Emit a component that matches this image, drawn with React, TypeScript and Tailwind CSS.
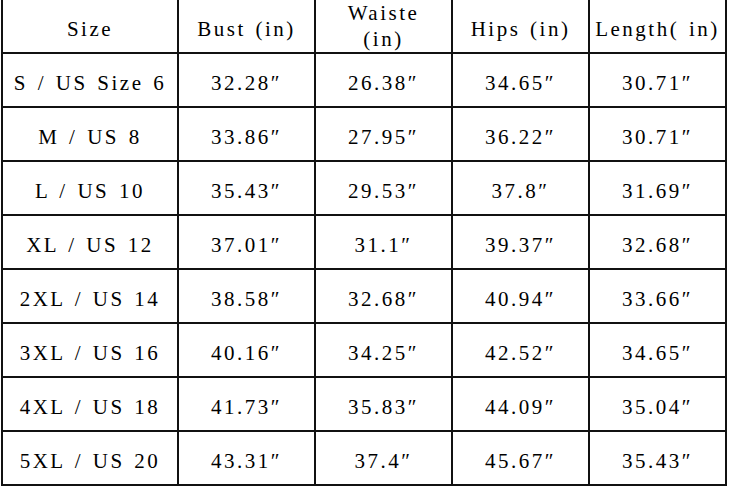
const headers = ["Size", "Bust (in)", "Waiste (in)", "Hips (in)", "Length( in)"];

const rows: string[][] = [
  ["S / US Size 6", "32.28″", "26.38″", "34.65″", "30.71″"],
  ["M / US 8", "33.86″", "27.95″", "36.22″", "30.71″"],
  ["L / US 10", "35.43″", "29.53″", "37.8″", "31.69″"],
  ["XL / US 12", "37.01″", "31.1″", "39.37″", "32.68″"],
  ["2XL / US 14", "38.58″", "32.68″", "40.94″", "33.66″"],
  ["3XL / US 16", "40.16″", "34.25″", "42.52″", "34.65″"],
  ["4XL / US 18", "41.73″", "35.83″", "44.09″", "35.04″"],
  ["5XL / US 20", "43.31″", "37.4″", "45.67″", "35.43″"],
];

function Cell({ children }: { children: React.ReactNode }) {
  return (
    <div className="flex h-[54px] items-center justify-center whitespace-pre border-r-2 border-b-2 border-[#111] pt-[6px] text-center leading-[26px]">
      {children}
    </div>
  );
}

export default function App() {
  return (
    <div className="h-[487px] w-[729px] overflow-hidden bg-white">
      <div
        className="ml-[1px] grid w-[726px] grid-cols-[176px_137px_137px_137px_137px] border-l-2 border-[#111] text-[21px] tracking-[2.5px] text-black [word-spacing:2px]"
        style={{ fontFamily: '"Liberation Serif", "Noto Sans CJK SC", serif' }}
      >
        {headers.map((h) => (
          <Cell key={h}>
            {h.startsWith("Waiste") ? (
              <span className="-mt-[6px]">
                Waiste
                <br />
                (in)
              </span>
            ) : (
              h
            )}
          </Cell>
        ))}
        {rows.map((r) =>
          r.map((c, i) => <Cell key={r[0] + i}>{c}</Cell>)
        )}
      </div>
    </div>
  );
}
